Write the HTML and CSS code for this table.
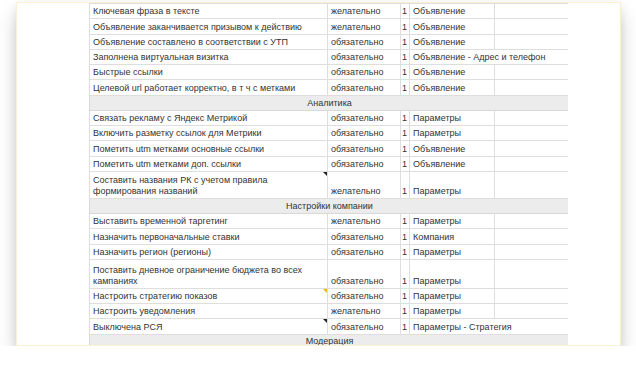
FILE: index.html
```html
<!DOCTYPE html>
<html lang="ru">
<head>
<meta charset="utf-8">
<link rel="stylesheet" href="styles.css">
</head>
<body>
<div class="card">
  <div class="side-left"></div>
  <div class="sheet">
    <table class="grid">
      <colgroup>
        <col class="c1"><col class="c2"><col class="c3"><col class="c4"><col class="c5">
      </colgroup>
      <tbody>
        <tr><td>Ключевая фраза в тексте</td><td>желательно</td><td class="num">1</td><td>Объявление</td><td></td></tr>
        <tr><td>Объявление заканчивается призывом к действию</td><td>желательно</td><td class="num">1</td><td>Объявление</td><td></td></tr>
        <tr><td>Объявление составлено в соответствии с УТП</td><td>обязательно</td><td class="num">1</td><td>Объявление</td><td></td></tr>
        <tr><td>Заполнена виртуальная визитка</td><td>обязательно</td><td class="num">1</td><td class="wide" colspan="2">Объявление - Адрес и телефон</td></tr>
        <tr><td>Быстрые ссылки</td><td>обязательно</td><td class="num">1</td><td>Объявление</td><td></td></tr>
        <tr><td>Целевой url работает корректно, в т ч с метками</td><td>обязательно</td><td class="num">1</td><td>Объявление</td><td></td></tr>
        <tr class="section"><td colspan="5">Аналитика</td></tr>
        <tr><td>Связать рекламу с Яндекс Метрикой</td><td>обязательно</td><td class="num">1</td><td>Параметры</td><td></td></tr>
        <tr><td>Включить разметку ссылок для Метрики</td><td>обязательно</td><td class="num">1</td><td>Параметры</td><td></td></tr>
        <tr><td>Пометить utm метками основные ссылки</td><td>обязательно</td><td class="num">1</td><td>Объявление</td><td></td></tr>
        <tr><td>Пометить utm метками доп. ссылки</td><td>обязательно</td><td class="num">1</td><td>Объявление</td><td></td></tr>
        <tr class="tall"><td class="note note-dark">Составить названия РК с учетом правила<br>формирования названий</td><td>желательно</td><td class="num">1</td><td>Параметры</td><td></td></tr>
        <tr class="section"><td colspan="5">Настройки компании</td></tr>
        <tr><td>Выставить временной таргетинг</td><td>желательно</td><td class="num">1</td><td>Параметры</td><td></td></tr>
        <tr><td>Назначить первоначальные ставки</td><td>обязательно</td><td class="num">1</td><td>Компания</td><td></td></tr>
        <tr><td>Назначить регион (регионы)</td><td>обязательно</td><td class="num">1</td><td>Параметры</td><td></td></tr>
        <tr class="tall2"><td>Поставить дневное ограничение бюджета во всех<br>кампаниях</td><td>обязательно</td><td class="num">1</td><td>Параметры</td><td></td></tr>
        <tr><td class="note note-gold">Настроить стратегию показов</td><td>обязательно</td><td class="num">1</td><td>Параметры</td><td></td></tr>
        <tr><td>Настроить уведомления</td><td>желательно</td><td class="num">1</td><td>Параметры</td><td></td></tr>
        <tr><td class="note note-dark">Выключена РСЯ</td><td>обязательно</td><td class="num">1</td><td class="wide" colspan="2">Параметры - Стратегия</td></tr>
        <tr class="section last"><td colspan="5">Модерация</td></tr>
      </tbody>
    </table>
  </div>
  <div class="side-right"></div>
</div>
</body>
</html>
```

FILE: styles.css
```css
html, body {
  margin: 0;
  padding: 0;
  background: #ffffff;
}

body {
  font-family: "Liberation Sans", Arial, sans-serif;
}

.card {
  margin: 2px 0 0 16px;
  width: 603px;
  height: 342px;
  border: 1px solid #fbf1d2;
  background: #ffffff;
  display: flex;
  overflow: hidden;
  box-shadow: 0 12px 18px rgba(0, 0, 0, 0.2), 0 2px 8px rgba(0, 0, 0, 0.06);
}

.side-left {
  width: 72px;
  flex: none;
  background: #ffffff;
}

.sheet {
  width: 479px;
  flex: none;
  overflow: hidden;
}

.side-right {
  flex: 1;
  background: #ffffff;
}

.grid {
  border-collapse: collapse;
  table-layout: fixed;
  width: 479px;
  font-size: 9px;
  color: #333333;
}

.c1 { width: 238px; }
.c2 { width: 73px; }
.c3 { width: 9px; }
.c4 { width: 85px; }
.c5 { width: 74px; }

.grid td {
  border: 1px solid #dedede;
  height: 13.25px;
  padding: 0 2px 1px 3px;
  vertical-align: bottom;
  white-space: nowrap;
  line-height: 11px;
  overflow: hidden;
}

.grid td.wide {
  overflow: visible;
}

.grid td.num {
  text-align: right;
  padding: 0 2px 1px 0;
}

.grid tr.tall td {
  height: 25px;
}

.grid tr.tall2 td {
  height: 27px;
}

.grid tr.section td {
  background: #ececec;
  text-align: center;
  border-color: #d8d8d8;
}

.grid tr.last td {
  vertical-align: top;
  padding-top: 1px;
  padding-bottom: 0;
}

.grid td.note {
  position: relative;
}

.grid td.note::after {
  content: "";
  position: absolute;
  top: 0;
  right: 0;
  border-style: solid;
  border-width: 0 4px 4px 0;
  border-color: transparent #222 transparent transparent;
}

.grid td.note-gold::after {
  border-color: transparent #f0b400 transparent transparent;
}
```
